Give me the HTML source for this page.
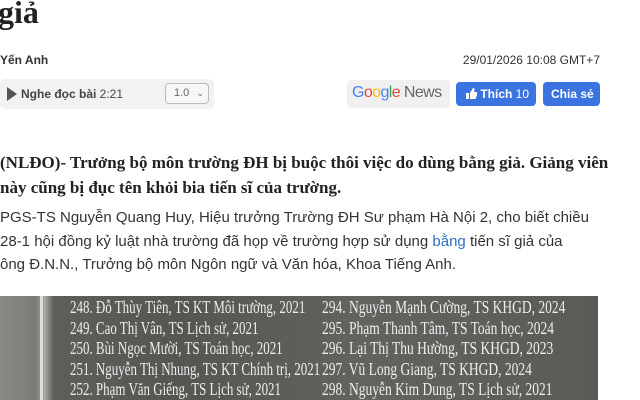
<!DOCTYPE html>
<html><head><meta charset="utf-8"><style>
*{margin:0;padding:0;box-sizing:border-box}
body{width:640px;height:400px;overflow:hidden;background:#fff;position:relative;font-family:"Liberation Sans",sans-serif;color:#222}
.a{position:absolute;white-space:nowrap}
</style></head><body>
<div class="a" style="left:-2px;top:-6px;font:bold 32px 'Liberation Serif',serif;color:#222">giả</div>
<div class="a" style="left:0;top:53px;font-size:12px;font-weight:bold;color:#333">Yến Anh</div>
<div class="a" style="right:40px;top:53px;font-size:12px;color:#333">29/01/2026 10:08 GMT+7</div>
<div class="a" style="left:0;top:79px;width:214px;height:30px;background:#f2f2f2;border-radius:5px"></div>
<svg class="a" style="left:6px;top:87px" width="12" height="14"><path d="M1 0L11 7L1 14Z" fill="#555"/></svg>
<div class="a" style="left:21px;top:87px;font-size:12px;color:#444"><b>Nghe đọc bài</b> 2:21</div>
<div class="a" style="left:165px;top:83px;width:44px;height:21px;border:1px solid #bbb;border-radius:4px;background:#f7f7f7;font-size:11px;color:#666;padding:3px 0 0 8px">1.0 <span style="font-size:9px;margin-left:4px">⌄</span></div>
<div class="a" style="left:347px;top:80px;width:103px;height:28px;background:#f0f0f0;border-radius:4px;font-size:16px;padding:4px 0 0 5px;letter-spacing:-0.6px"><span style="color:#4285f4">G</span><span style="color:#ea4335">o</span><span style="color:#fbbc05">o</span><span style="color:#4285f4">g</span><span style="color:#34a853">l</span><span style="color:#ea4335">e</span><span style="color:#666"> News</span></div>
<div class="a" style="left:456px;top:82px;width:80px;height:24px;background:#3b74e0;border-radius:4px;color:#fff;font-size:12px;font-weight:bold;padding:5px 0 0 10px">
<svg width="11" height="11" style="vertical-align:-1px"><path d="M0 5h3v6H0zM4 5l3-5c1 0 2 1 1.5 2.5L8 4h3v3l-1.5 4H4z" fill="#fff"/></svg> Thích <span style="font-weight:normal">10</span></div>
<div class="a" style="left:543px;top:82px;width:57px;height:24px;background:#3b74e0;border-radius:4px;color:#fff;font-size:12px;font-weight:bold;padding:5px 0 0 8px">Chia sẻ</div>
<div class="a" style="left:0;top:150px;font:bold 17px/25px 'Liberation Serif',serif;color:#222">(NLĐO)- Trưởng bộ môn trường ĐH bị buộc thôi việc do dùng bằng giả. Giảng viên<br>này cũng bị đục tên khỏi bia tiến sĩ của trường.</div>
<div class="a" style="left:0;top:206px;font-size:15px;line-height:23.5px;color:#333">PGS-TS Nguyễn Quang Huy, Hiệu trưởng Trường ĐH Sư phạm Hà Nội 2, cho biết chiều<br>28-1 hội đồng kỷ luật nhà trường đã họp về trường hợp sử dụng <span style="color:#2a6fc9">bằng</span> tiến sĩ giả của<br>ông Đ.N.N., Trưởng bộ môn Ngôn ngữ và Văn hóa, Khoa Tiếng Anh.</div>
<div class="a" style="left:0;top:296px;width:598px;height:104px;background:linear-gradient(90deg,#8a8a84 0,#7c7c76 6%,#a8a8a2 7.5%,#5e5f5a 9%,#555651 30%,#62635e 60%,#5a5b56 100%)"></div>
<div class="a" style="left:40px;top:296px;width:3px;height:104px;background:#ddd"></div>
<div class="a" style="left:70px;top:297px;font:18px/20.5px 'Liberation Serif',serif;color:#eee;transform:scaleX(.72);transform-origin:0 0">248. Đỗ Thùy Tiên, TS KT Môi trường, 2021<br>249. Cao Thị Vân, TS Lịch sử, 2021<br>250. Bùi Ngọc Mười, TS Toán học, 2021<br>251. Nguyễn Thị Nhung, TS KT Chính trị, 2021<br>252. Phạm Văn Giếng, TS Lịch sử, 2021</div>
<div class="a" style="left:322px;top:297px;font:18px/20.5px 'Liberation Serif',serif;color:#eee;transform:scaleX(.75);transform-origin:0 0">294. Nguyễn Mạnh Cường, TS KHGD, 2024<br>295. Phạm Thanh Tâm, TS Toán học, 2024<br>296. Lại Thị Thu Hường, TS KHGD, 2023<br>297. Vũ Long Giang, TS KHGD, 2024<br>298. Nguyễn Kim Dung, TS Lịch sử, 2021</div>
</body></html>
